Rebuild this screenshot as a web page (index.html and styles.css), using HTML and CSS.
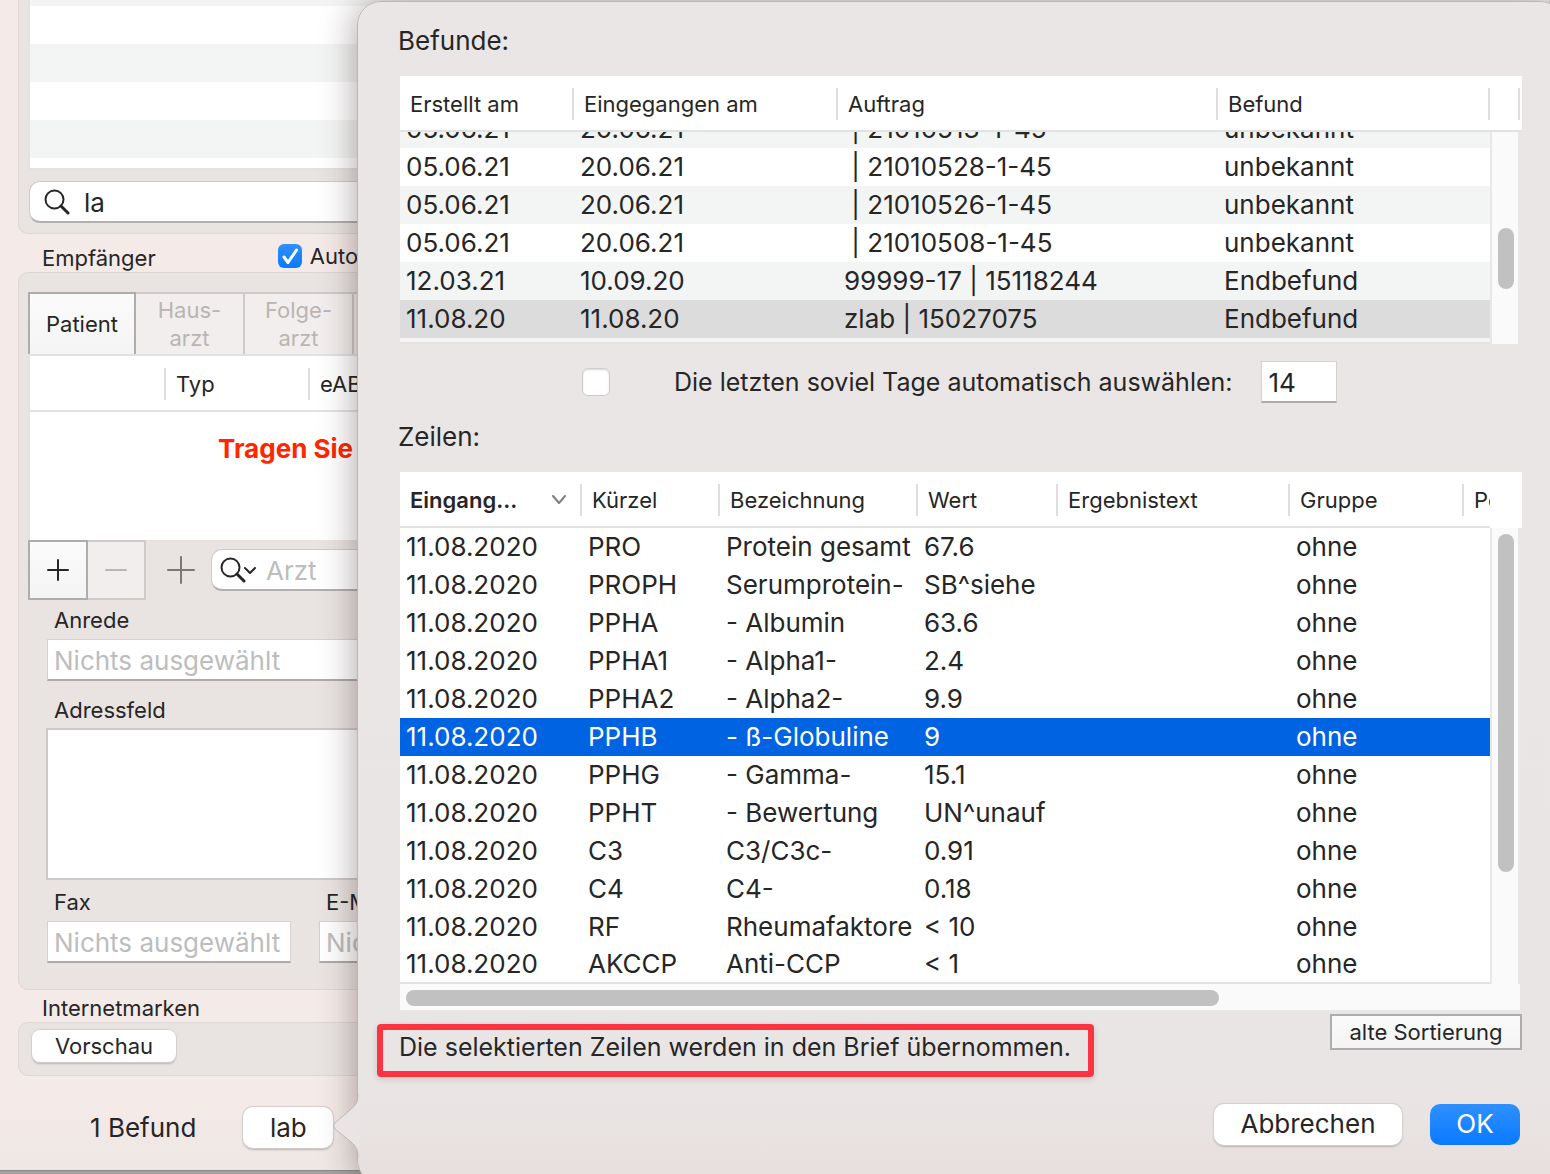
FILE: index.html
```html
<!DOCTYPE html>
<html lang="de">
<head>
<meta charset="utf-8">
<meta name="viewport" content="width=device-width, initial-scale=1">
<title>Laborbefunde</title>
<link rel="stylesheet" href="styles.css">
</head>
<body>
<div class="stage">
  <main class="window">
    <section class="group group-list">
      <div class="list">
        <div class="stripe cut"></div>
        <div class="stripe"></div>
        <div class="stripe"></div>
        <div class="stripe"></div>
        <div class="stripe"></div>
        <div class="stripe rest"></div>
      </div>
      <label class="search">
        <svg class="icon" width="26" height="26" viewBox="0 0 26 26" aria-hidden="true"><circle cx="10.500" cy="10.500" r="9" /><path d="M17 17l7 7" class="thick"/></svg>
        <input class="search-input" type="text" value="la" aria-label="Suchen">
      </label>
    </section>

    <div class="group-title">
      <h2 class="caption">Empfänger</h2>
      <label class="auto"><input class="check" type="checkbox" checked>Auto</label>
    </div>

    <section class="group group-recipient">
      <div class="tabs">
        <button class="tab active" type="button">Patient</button>
        <button class="tab" type="button" disabled>Haus-<br>arzt</button>
        <button class="tab" type="button" disabled>Folge-<br>arzt</button>
        <button class="tab" type="button" disabled aria-label="Weitere"></button>
      </div>
      <div class="recipients">
        <table class="grid recipients-grid">
          <colgroup><col class="w136"><col class="w144"><col></colgroup>
          <thead><tr><th></th><th>Typ</th><th>eAB</th></tr></thead>
        </table>
        <p class="warning">Tragen Sie</p>
      </div>
      <div class="tools">
        <button class="square" type="button" aria-label="Hinzufügen"><svg width="22" height="22" viewBox="0 0 22 22"><path d="M11 1v20M1 11h20"/></svg></button>
        <button class="square off" type="button" disabled aria-label="Entfernen"><svg width="22" height="22" viewBox="0 0 22 22"><path d="M1 11h20"/></svg></button>
        <button class="bare" type="button" aria-label="Arzt hinzufügen"><svg width="28" height="28" viewBox="0 0 28 28"><path d="M14 1v26M1 14h26"/></svg></button>
        <label class="search small">
          <svg class="icon" width="36" height="26" viewBox="0 0 36 26" aria-hidden="true"><circle cx="10.500" cy="10.500" r="9"/><path d="M17 17l7 7" class="thick"/><path d="M25 11l5 5 5-5"/></svg>
          <input class="search-input" type="text" placeholder="Arzt" aria-label="Arzt">
        </label>
      </div>
      <div class="form">
        <label class="caption" for="anrede">Anrede</label>
        <input class="field" id="anrede" type="text" placeholder="Nichts ausgewählt">
        <label class="caption" for="adresse">Adressfeld</label>
        <textarea class="area" id="adresse"></textarea>
        <div class="pair">
          <div class="cell">
            <label class="caption" for="fax">Fax</label>
            <input class="field" id="fax" type="text" placeholder="Nichts ausgewählt">
          </div>
          <div class="cell">
            <label class="caption" for="mail">E-Mail</label>
            <input class="field" id="mail" type="text" placeholder="Nichts ausgewählt">
          </div>
        </div>
      </div>
    </section>

    <h2 class="caption stamps-title">Internetmarken</h2>
    <section class="group group-stamps">
      <button class="push compact" type="button">Vorschau</button>
    </section>

    <div class="status">
      <span>1 Befund</span>
      <button class="push" type="button">lab</button>
    </div>
  </main>

  <section class="popover" role="dialog" aria-label="Befunde">
    <svg class="arrow" width="26" height="64" viewBox="0 0 26 64" aria-hidden="true">
      <path class="fill" d="M26 0C25 8 23 11 18 15L2 29Q-1 32 2 35L18 48C23 52 25 56 26 64Z"/>
      <path class="edge" d="M25 1C25 8 23 11 18 15L2 29Q-1 32 2 35L18 48C23 52 25 56 25 63"/>
    </svg>

    <h1 class="heading">Befunde:</h1>
    <div class="table-box">
      <table class="grid striped">
        <colgroup><col class="w174"><col class="w264"><col class="w380"><col></colgroup>
        <thead><tr><th>Erstellt am</th><th>Eingegangen am</th><th>Auftrag</th><th>Befund</th></tr></thead>
        <tbody>
          <tr class="peek"><td><div>05.06.21</div></td><td><div>20.06.21</div></td><td><div>&nbsp;| 21010513-1-45</div></td><td><div>unbekannt</div></td></tr>
          <tr><td>05.06.21</td><td>20.06.21</td><td>&nbsp;| 21010528-1-45</td><td>unbekannt</td></tr>
          <tr><td>05.06.21</td><td>20.06.21</td><td>&nbsp;| 21010526-1-45</td><td>unbekannt</td></tr>
          <tr><td>05.06.21</td><td>20.06.21</td><td>&nbsp;| 21010508-1-45</td><td>unbekannt</td></tr>
          <tr><td>12.03.21</td><td>10.09.20</td><td>99999-17 | 15118244</td><td>Endbefund</td></tr>
          <tr class="chosen"><td>11.08.20</td><td>11.08.20</td><td>zlab | 15027075</td><td>Endbefund</td></tr>
          <tr class="sliver"><td colspan="4"></td></tr>
        </tbody>
      </table>
      <div class="scroll-y">
        <div class="corner lined"></div>
        <div class="track"><div class="thumb thumb-orders"></div></div>
      </div>
    </div>

    <div class="option">
      <input class="check large" id="auto-days" type="checkbox">
      <label id="days-label" for="auto-days">Die letzten soviel Tage automatisch auswählen:</label>
      <input class="field days" type="text" value="14" aria-labelledby="days-label">
    </div>

    <h1 class="heading">Zeilen:</h1>
    <div class="table-box">
      <table class="grid lines">
        <colgroup><col class="w182"><col class="w138"><col class="w198"><col class="w140"><col class="w232"><col class="w174"><col></colgroup>
        <thead><tr>
          <th class="sorted"><div class="sort">Eingang...<svg width="16" height="10" viewBox="0 0 16 10" aria-hidden="true"><path d="M2 1l6 7 6-7"/></svg></div></th>
          <th>Kürzel</th><th>Bezeichnung</th><th>Wert</th><th>Ergebnistext</th><th>Gruppe</th><th class="plain">Pe</th>
        </tr></thead>
        <tbody>
          <tr><td>11.08.2020</td><td>PRO</td><td>Protein gesamt</td><td>67.6</td><td></td><td>ohne</td><td></td></tr>
          <tr><td>11.08.2020</td><td>PROPH</td><td>Serumprotein-</td><td>SB^siehe</td><td></td><td>ohne</td><td></td></tr>
          <tr><td>11.08.2020</td><td>PPHA</td><td>- Albumin</td><td>63.6</td><td></td><td>ohne</td><td></td></tr>
          <tr><td>11.08.2020</td><td>PPHA1</td><td>- Alpha1-</td><td>2.4</td><td></td><td>ohne</td><td></td></tr>
          <tr><td>11.08.2020</td><td>PPHA2</td><td>- Alpha2-</td><td>9.9</td><td></td><td>ohne</td><td></td></tr>
          <tr class="active"><td>11.08.2020</td><td>PPHB</td><td>- ß-Globuline</td><td>9</td><td></td><td>ohne</td><td></td></tr>
          <tr><td>11.08.2020</td><td>PPHG</td><td>- Gamma-</td><td>15.1</td><td></td><td>ohne</td><td></td></tr>
          <tr><td>11.08.2020</td><td>PPHT</td><td>- Bewertung</td><td>UN^unauf</td><td></td><td>ohne</td><td></td></tr>
          <tr><td>11.08.2020</td><td>C3</td><td>C3/C3c-</td><td>0.91</td><td></td><td>ohne</td><td></td></tr>
          <tr><td>11.08.2020</td><td>C4</td><td>C4-</td><td>0.18</td><td></td><td>ohne</td><td></td></tr>
          <tr><td>11.08.2020</td><td>RF</td><td>Rheumafaktore</td><td>&lt; 10</td><td></td><td>ohne</td><td></td></tr>
          <tr><td>11.08.2020</td><td>AKCCP</td><td>Anti-CCP</td><td>&lt; 1</td><td></td><td>ohne</td><td></td></tr>
        </tbody>
      </table>
      <div class="scroll-y">
        <div class="corner"></div>
        <div class="track"><div class="thumb thumb-lines"></div></div>
      </div>
      <div class="scroll-x"><div class="thumb thumb-wide"></div></div>
    </div>

    <div class="note-row">
      <p class="note">Die selektierten Zeilen werden in den Brief übernommen.</p>
      <button class="flat" type="button">alte Sortierung</button>
    </div>

    <div class="actions">
      <button class="push cancel" type="button">Abbrechen</button>
      <button class="push primary" type="button">OK</button>
    </div>
  </section>
</div>
</body>
</html>
```
FILE: styles.css
```css
:root {
  --text: #262626;
  --muted: #bdbdbd;
  --line: #e2e2e3;
  --group: #e9e4e2;
  --body-size: 26px;
  --sentence-size: 25px;
  --small-size: 22px;
}

* { box-sizing: border-box; }

body {
  margin: 0;
  background: #a3a1a0;
  color: var(--text);
  font-family: Inter, "Liberation Sans", sans-serif;
  font-size: var(--body-size);
  line-height: 32px;
}

h1, h2, p { margin: 0; font-size: inherit; font-weight: 400; }

button, input, textarea { font: inherit; color: inherit; margin: 0; }

button { padding: 0; }

input::placeholder { color: var(--muted); opacity: 1; }

.stage {
  position: relative;
  min-height: 100vh;
  overflow: hidden;
}

/* Main window */
.window {
  display: flex;
  flex-direction: column;
  min-height: calc(100vh - 3px);
  padding-left: 18px;
  background: linear-gradient(#f4eae8 0, #f4eae8 1110px, #eee7e4 100%);
  border-bottom: 1px solid #8a8887;
}

.group {
  background: var(--group);
  border: 1px solid #dcd7d5;
  border-radius: 10px;
}

.caption { font-size: var(--small-size); line-height: 28px; }

.group-list {
  height: 234px;
  padding-left: 9px;
  border-top: 0;
  border-radius: 0 0 10px 10px;
}

.list {
  border-left: 2px solid var(--line);
  border-bottom: 2px solid var(--line);
}

.stripe { height: 38px; background: #fff; }
.stripe:nth-child(odd) { background: #f3f5f4; }
.stripe.cut { height: 6px; }
.stripe.rest { height: 10px; background: #fff; }

.search {
  display: flex;
  align-items: center;
  gap: 14px;
  height: 42px;
  margin: 11px 0 0 1px;
  padding-left: 14px;
  background: #fff;
  border: 1px solid #d0cbca;
  border-bottom: 2px solid #b3afae;
  border-radius: 11px;
}

.search-input {
  flex: 1;
  min-width: 0;
  padding: 2px 0 0;
  border: 0;
  background: none;
}

.icon { flex: none; }
svg path, svg circle { fill: none; stroke: currentColor; stroke-width: 2; stroke-linecap: round; stroke-linejoin: round; }
svg .thick { stroke-width: 3; }

.group-title {
  display: flex;
  align-items: center;
  gap: 122px;
  height: 38px;
  padding: 6px 0 0 24px;
}

.group-title .caption { padding-top: 4px; }

.auto {
  display: flex;
  align-items: center;
  gap: 8px;
  font-size: var(--small-size);
}

.check {
  appearance: none;
  width: 24px;
  height: 24px;
  margin: 0;
  border-radius: 6px;
  background: #fff;
  border: 1px solid #d0cccb;
}

.check:checked {
  border: 0;
  background: url("data:image/svg+xml,%3Csvg xmlns='http://www.w3.org/2000/svg' viewBox='0 0 24 24'%3E%3Cpath d='M6 13l4 5.500L18.500 6' fill='none' stroke='white' stroke-width='3' stroke-linecap='round' stroke-linejoin='round'/%3E%3C/svg%3E"), linear-gradient(#2f90ff, #0a7aff);
}

.check.large { width: 28px; height: 28px; box-shadow: inset 0 1px 2px #d8d8d8; }

.group-recipient { padding: 19px 0 26px 9px; }

.tabs { display: flex; }

.tab {
  width: 109px;
  height: 62px;
  background: #f2eeed;
  border: 2px solid #cfcbca;
  border-left: 0;
  border-bottom: 0;
  color: #b9b5b4;
  font-size: var(--small-size);
  line-height: 28px;
}

.tab.active {
  width: 108px;
  background: linear-gradient(#fbfbfb, #f4f4f4);
  border: 2px solid #adadad;
  border-bottom: 0;
  color: var(--text);
}

.tab:last-child { flex: 1; }

.recipients {
  height: 186px;
  background: #fff;
  border-left: 2px solid var(--line);
  border-top: 2px solid var(--line);
}

.warning {
  padding: 21px 0 0 188px;
  color: #ff2600;
  font-weight: 700;
}

.tools { display: flex; align-items: center; }

.square {
  display: grid;
  place-items: center;
  width: 60px;
  height: 60px;
  background: linear-gradient(#fbfbfb, #f4f4f4);
  border: 2px solid #adadad;
}

.square.off {
  width: 58px;
  background: #f2eeed;
  border-color: #cfcbca;
  border-left: 0;
  color: #b9b5b4;
}

.bare {
  display: grid;
  place-items: center;
  width: 65px;
  height: 60px;
  padding-left: 5px;
  border: 0;
  background: none;
  color: #7d7877;
}

.search.small {
  flex: 1;
  gap: 10px;
  margin: 0;
  padding-left: 8px;
}

.form { display: flex; flex-direction: column; padding-left: 18px; }

.form .caption { padding-left: 8px; }

.form > .caption { margin-top: 6px; }

.field {
  height: 42px;
  margin: 5px 0 0 1px;
  padding: 2px 6px 0;
  background: #fff;
  border: 1px solid #d6d1d0;
  border-bottom: 2px solid #aeaaa9;
}

.form > .field + .caption { margin-top: 15px; }

.area {
  height: 152px;
  margin-top: 4px;
  resize: none;
  background: #fff;
  border: 2px solid #cfcaca;
  border-radius: 0;
}

.pair { display: flex; gap: 27px; margin-top: 8px; }

.cell { display: flex; flex-direction: column; }

.cell .field { width: 244px; }

.stamps-title { padding: 4px 0 0 24px; }

.group-stamps { height: 54px; padding: 7px 0 0 13px; }

.push {
  width: 90px;
  height: 41px;
  background: #fff;
  border: 0;
  border-radius: 10px;
  box-shadow: 0 0 1px 1px #d4cfce, 0 2px 2px #b5b1b0;
}

.push.compact {
  display: block;
  width: 144px;
  height: 32px;
  border-radius: 8px;
  font-size: var(--small-size);
}

.status {
  display: flex;
  align-items: center;
  gap: 47px;
  padding: 31px 0 0 72px;
}

/* Popover, floats over the window */
.popover {
  position: absolute;
  top: 1px;
  right: -14px;
  bottom: -10px;
  left: 357px;
  padding: 23px 41px 0 42px;
  background: linear-gradient(#eae6e5 0, #eae5e5 1090px, #e7dfde 100%);
  border: 1px solid #bbb7b6;
  border-radius: 24px;
  box-shadow: 0 0 36px rgba(40, 20, 20, 0.4);
}

.arrow {
  position: absolute;
  left: -25px;
  bottom: 25px;
}

.arrow .fill { fill: #eae5e4; stroke: none; }
.arrow .edge { stroke: #bbb7b6; stroke-width: 1; }

.heading { margin: 0 0 19px -2px; }

.table-box {
  display: grid;
  grid-template-columns: minmax(0, 1fr) 32px;
}

.grid {
  width: 100%;
  table-layout: fixed;
  border-collapse: separate;
  border-spacing: 0;
  background: #fff;
  border-bottom: 2px solid var(--line);
}

.grid th {
  height: 56px;
  padding: 1px 0 0 10px;
  overflow: hidden;
  text-align: left;
  font-size: var(--small-size);
  font-weight: 400;
  white-space: nowrap;
  border-bottom: 2px solid var(--line);
  background: linear-gradient(#dedede, #dedede) right 12px / 2px 32px no-repeat;
}

.grid th.plain { background: none; }
.grid th.sorted { font-weight: 600; }

.sort { display: flex; align-items: center; justify-content: space-between; padding-right: 15px; }
.sort path { stroke: #808080; }

.grid td {
  height: 38px;
  padding: 0 0 0 6px;
  overflow: hidden;
  white-space: nowrap;
}

.lines tr:last-child td { height: 36px; }

.recipients-grid { border-bottom: 0; }

.striped tbody tr:nth-child(odd) td { background: #f3f5f4; }
.grid .chosen td { background: #dcdcdc; }
.grid .active td { background: #0063e1; color: #fff; }

/* Row scrolled halfway under the header */
.grid .peek td, .grid .peek div { height: 16px; }
.grid .peek div { display: flex; align-items: flex-end; overflow: hidden; line-height: 38px; }
.grid .sliver td { height: 4px; padding: 0; }

.w136 { width: 136px; }
.w138 { width: 138px; }
.w140 { width: 140px; }
.w144 { width: 144px; }
.w174 { width: 174px; }
.w182 { width: 182px; }
.w198 { width: 198px; }
.w232 { width: 232px; }
.w264 { width: 264px; }
.w380 { width: 380px; }

.scroll-y { display: flex; flex-direction: column; }

.corner { height: 56px; background: #fff; }

.corner.lined {
  border-bottom: 2px solid var(--line);
  background: linear-gradient(#dedede, #dedede) 28px 12px / 2px 32px no-repeat, #fff;
}

.track {
  flex: 1;
  width: 30px;
  padding-left: 6px;
  background: #fafafa;
  border: solid #e8e8e8;
  border-width: 0 2px;
}

.thumb { width: 16px; border-radius: 8px; background: #c1c1c1; }

.thumb-orders { height: 61px; margin-top: 96px; }
.thumb-lines { height: 338px; margin-top: 6px; }
.thumb-wide { width: 73%; height: 16px; }

.scroll-x {
  grid-column: 1 / -1;
  height: 28px;
  margin-right: 2px;
  padding: 6px 0 0 6px;
  background: #fafafa;
  border-bottom: 2px solid #e8e8e8;
}

.option {
  display: flex;
  align-items: center;
  margin: 17px 0 18px;
  padding-left: 182px;
}

.option label { margin: 0 29px 0 64px; font-size: var(--sentence-size); }

.days { width: 76px; margin: 0; }

.note-row {
  display: flex;
  align-items: flex-start;
  justify-content: space-between;
  padding-top: 2px;
}

.note {
  margin: 10px 0 0 -23px;
  padding: 1px 17px 8px 16px;
  border: 6px solid #fb3441;
  border-radius: 4px;
  box-shadow: 0 2px 6px rgba(0, 0, 0, 0.15);
  font-size: var(--sentence-size);
}

.flat {
  width: 192px;
  height: 36px;
  background: linear-gradient(#fafafa, #f4f4f4);
  border: 2px solid #adadad;
  font-size: var(--small-size);
  line-height: 28px;
}

.actions {
  display: flex;
  justify-content: flex-end;
  gap: 28px;
  margin-top: 27px;
  padding-right: 2px;
}

.actions .push { padding-bottom: 2px; }

.cancel { width: 188px; }

.primary {
  background: linear-gradient(#2f90ff, #0a7aff);
  box-shadow: none;
  color: #fff;
}
```
